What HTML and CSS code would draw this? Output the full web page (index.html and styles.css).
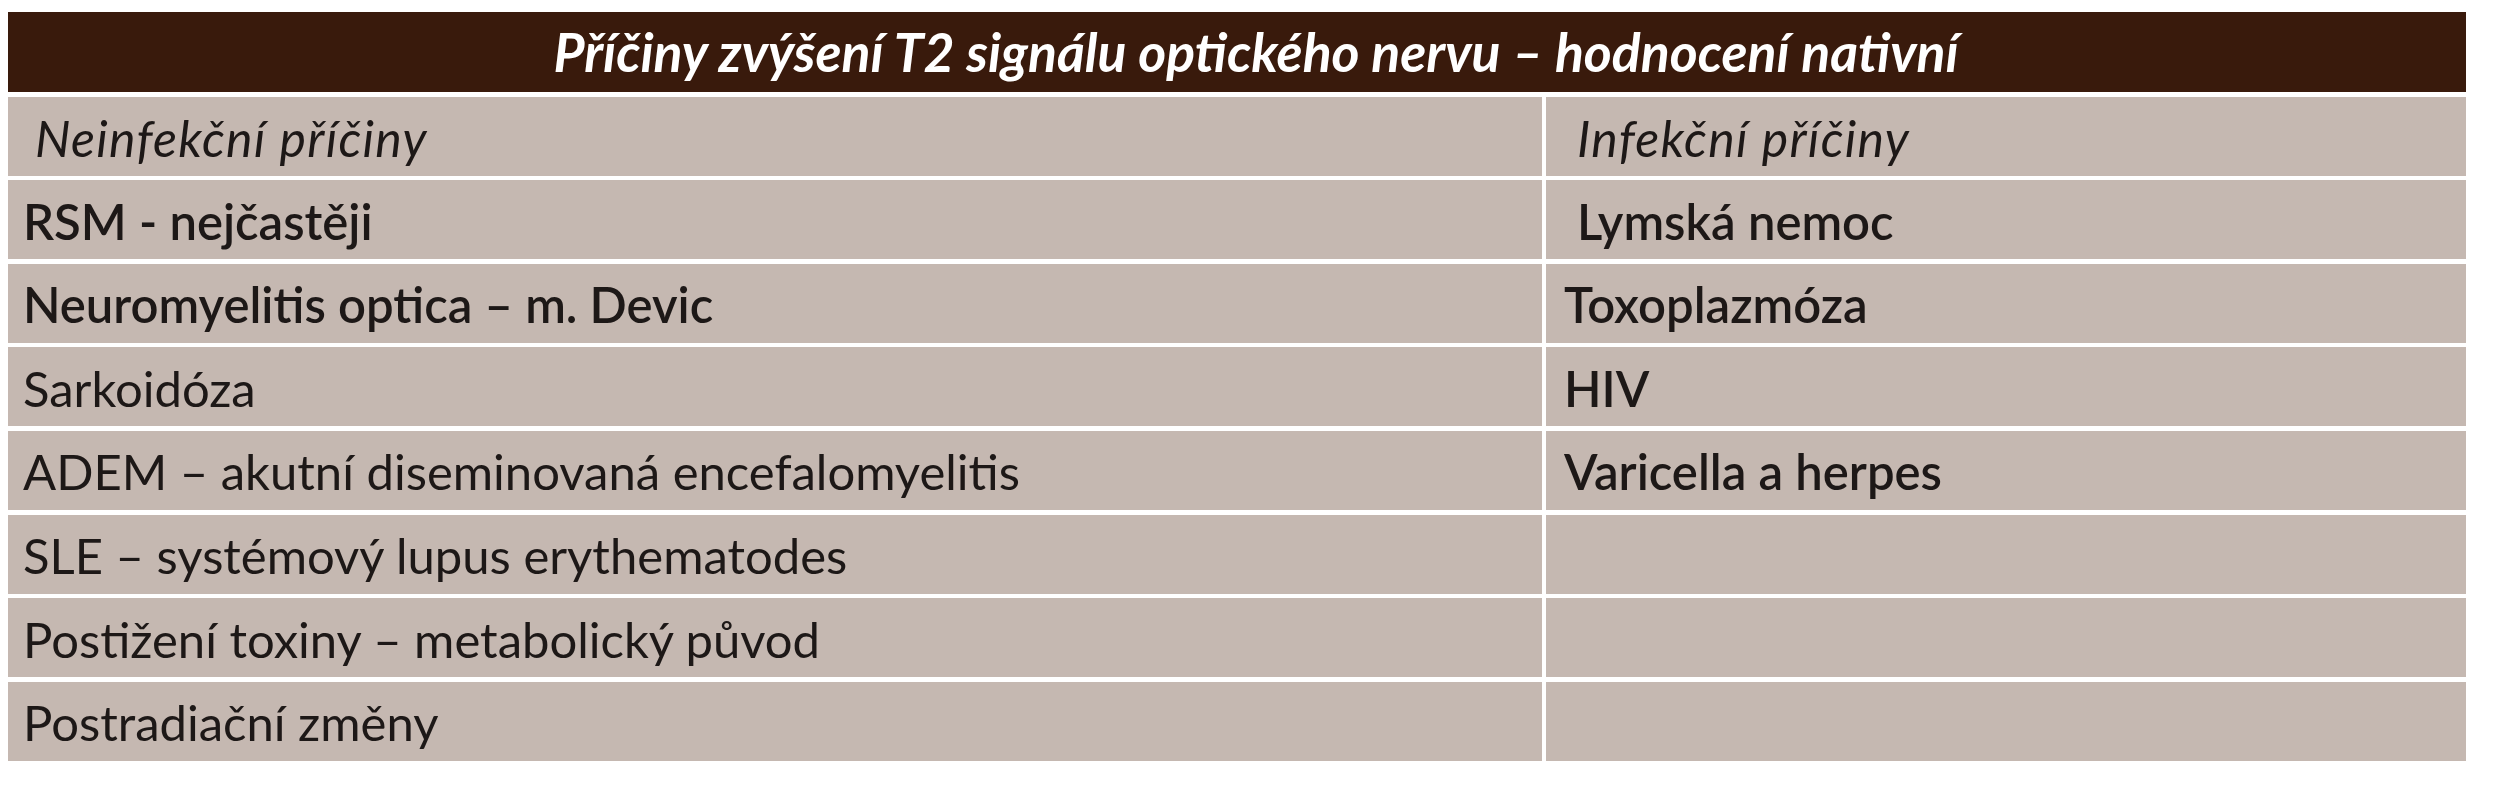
FILE: index.html
```html
<!DOCTYPE html>
<html lang="cs">
<head>
<meta charset="utf-8">
<title>Příčiny zvýšení T2 signálu optického nervu</title>
<link rel="stylesheet" href="styles.css">
</head>
<body>
<div class="table">
  <div class="cell head">Příčiny zvýšení T2 signálu optického nervu – hodnocení nativní</div>

  <div class="cell sub indent">Neinfekční příčiny</div>
  <div class="cell sub right indent">Infekční příčiny</div>

  <div class="cell strong">RSM - nejčastěji</div>
  <div class="cell strong right indent">Lymská nemoc</div>

  <div class="cell strong">Neuromyelitis optica – m. Devic</div>
  <div class="cell strong right">Toxoplazmóza</div>

  <div class="cell">Sarkoidóza</div>
  <div class="cell strong right">HIV</div>

  <div class="cell">ADEM – akutní diseminovaná encefalomyelitis</div>
  <div class="cell strong right">Varicella a herpes</div>

  <div class="cell">SLE – systémový lupus erythematodes</div>
  <div class="cell right"></div>

  <div class="cell">Postižení toxiny – metabolický původ</div>
  <div class="cell right"></div>

  <div class="cell">Postradiační změny</div>
  <div class="cell right"></div>
</div>
</body>
</html>
```

FILE: styles.css
```css
html, body {
  margin: 0;
  padding: 0;
  background: #ffffff;
}

body {
  padding: 12px 8px 0 8px;
  font-family: Lato, "Open Sans", "Liberation Sans", sans-serif;
  color: #1d1817;
}

.table {
  width: 2458px;
  display: grid;
  grid-template-columns: 1534px 920px;
  grid-template-rows: 80px;
  grid-auto-rows: 79px;
  column-gap: 4px;
  row-gap: 4.6px;
}

.cell {
  background: #c5b8b1;
  display: flex;
  align-items: center;
  padding: 3px 0 0 15px;
  font-size: 49px;
  line-height: 1;
  white-space: nowrap;
}

.cell.right {
  padding-left: 18px;
}

.cell.indent {
  padding-left: 27px;
}

.cell.right.indent {
  padding-left: 31px;
}

.head {
  grid-column: 1 / span 2;
  background: #391a0c;
  color: #ffffff;
  font-style: italic;
  font-weight: 700;
  font-size: 53.5px;
  justify-content: center;
  padding: 0 0 0 38px;
}

.sub {
  font-style: italic;
  font-size: 50px;
  letter-spacing: 1.3px;
}

.strong {
  font-weight: 600;
}
```
